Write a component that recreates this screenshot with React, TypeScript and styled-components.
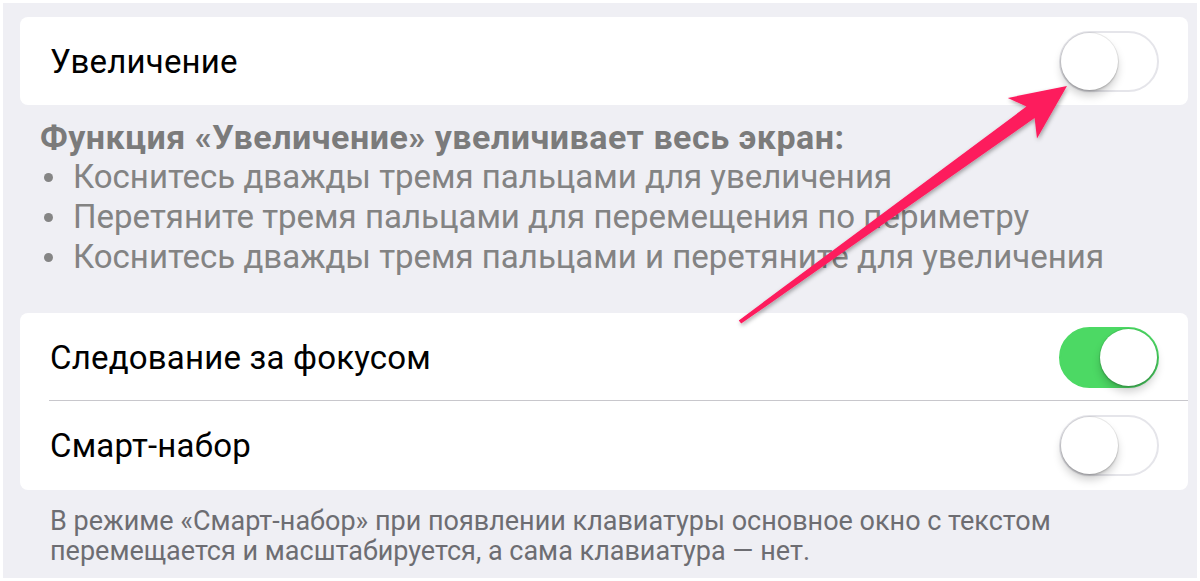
import React from "react";
import styled, { createGlobalStyle } from "styled-components";

const Global = createGlobalStyle`
  html, body { margin: 0; padding: 0; background: #ffffff; }
  body { font-family: Roboto, "Noto Sans", sans-serif; }
`;

const Page = styled.div`
  position: relative;
  margin: 3px;
  height: 575px;
  background: #efeff4;
  padding: 14px 9px 0 17px;
  box-sizing: border-box;
  display: flex;
  flex-direction: column;
`;

const Card = styled.div`
  background: #ffffff;
  border-radius: 8px;
  display: flex;
  flex-direction: column;
`;

const Row = styled.div<{ $h: number; $divider?: boolean }>`
  height: ${(p) => p.$h}px;
  display: flex;
  align-items: center;
  justify-content: space-between;
  padding: 0 29px 0 30px;
  box-sizing: border-box;
  position: relative;
  ${(p) =>
    p.$divider
      ? `&::after { content: ""; position: absolute; left: 29px; right: 0; bottom: 0; height: 1px; background: #c8c7cc; }`
      : ""}
`;

const Label = styled.span`
  font-family: Roboto, "Noto Sans", sans-serif;
  font-size: 33px;
  color: #000000;
  letter-spacing: 0.2px;
`;

const Track = styled.div<{ $on: boolean }>`
  width: 100px;
  height: 61px;
  border-radius: 31px;
  box-sizing: border-box;
  position: relative;
  background: ${(p) => (p.$on ? "#4cd964" : "#ffffff")};
  border: 2px solid ${(p) => (p.$on ? "#4cd964" : "#e5e5ea")};
`;

const Knob = styled.div<{ $on: boolean }>`
  position: absolute;
  top: 0;
  ${(p) => (p.$on ? "right: 0;" : "left: 0;")}
  width: 57px;
  height: 57px;
  border-radius: 50%;
  background: #ffffff;
  box-shadow: 0 6px 8px rgba(0, 0, 0, 0.18), 0 0 0 1px rgba(0, 0, 0, 0.08),
    0 2px 2px rgba(0, 0, 0, 0.12);
`;

const Desc = styled.div`
  height: 208px;
  padding: 12px 0 0 20px;
  box-sizing: border-box;
  color: #808080;
  font-family: Roboto, "Noto Sans", sans-serif;
`;

const DescHead = styled.div`
  font-size: 34px;
  font-weight: 700;
  letter-spacing: 0.5px;
  line-height: 40px;
  color: #7b7b7b;
`;

const Bullet = styled.div`
  font-size: 33px;
  line-height: 40px;
  display: flex;
  align-items: center;
  color: #838383;
`;

const Dot = styled.span`
  width: 33px;
  flex: none;
  display: flex;
  padding-left: 4px;
  box-sizing: border-box;

  &::before {
    content: "";
    width: 9px;
    height: 9px;
    border-radius: 50%;
    background: #858585;
  }
`;

const Footer = styled.div`
  padding: 16px 0 0 30px;
  font-family: Roboto, "Noto Sans", sans-serif;
  font-size: 27px;
  line-height: 30px;
  color: #6d6d72;
`;

const ArrowLayer = styled.svg`
  position: absolute;
  left: -3px;
  top: -3px;
  width: 1200px;
  height: 581px;
  pointer-events: none;
`;

function Switch({ on }: { on: boolean }) {
  return (
    <Track $on={on}>
      <Knob $on={on} />
    </Track>
  );
}

export default function App() {
  return (
    <>
      <Global />
      <Page>
        <Card>
          <Row $h={88}>
            <Label>Увеличение</Label>
            <Switch on={false} />
          </Row>
        </Card>
        <Desc>
          <DescHead>Функция «Увеличение» увеличивает весь экран:</DescHead>
          <Bullet>
            <Dot />Коснитесь дважды тремя пальцами для увеличения
          </Bullet>
          <Bullet>
            <Dot />Перетяните тремя пальцами для перемещения по периметру
          </Bullet>
          <Bullet>
            <Dot />Коснитесь дважды тремя пальцами и перетяните для увеличения
          </Bullet>
        </Desc>
        <Card>
          <Row $h={88} $divider>
            <Label>Следование за фокусом</Label>
            <Switch on={true} />
          </Row>
          <Row $h={89}>
            <Label>Смарт-набор</Label>
            <Switch on={false} />
          </Row>
        </Card>
        <Footer>
          В режиме «Смарт-набор» при появлении клавиатуры основное окно с текстом
          <br />
          перемещается и масштабируется, а сама клавиатура — нет.
        </Footer>
        <ArrowLayer viewBox="0 0 1200 581">
          <defs>
            <filter id="sh" x="-10%" y="-10%" width="120%" height="120%">
              <feDropShadow dx="1" dy="2" stdDeviation="2" floodColor="#000" floodOpacity="0.35" />
            </filter>
          </defs>
          <polygon
            points="738.8,320.4 1026.4,106.6 1007.8,97.9 1067,86 1037,138.5 1034.6,118 741.2,323.6"
            fill="#fd1b5d"
            filter="url(#sh)"
          />
        </ArrowLayer>
      </Page>
    </>
  );
}
